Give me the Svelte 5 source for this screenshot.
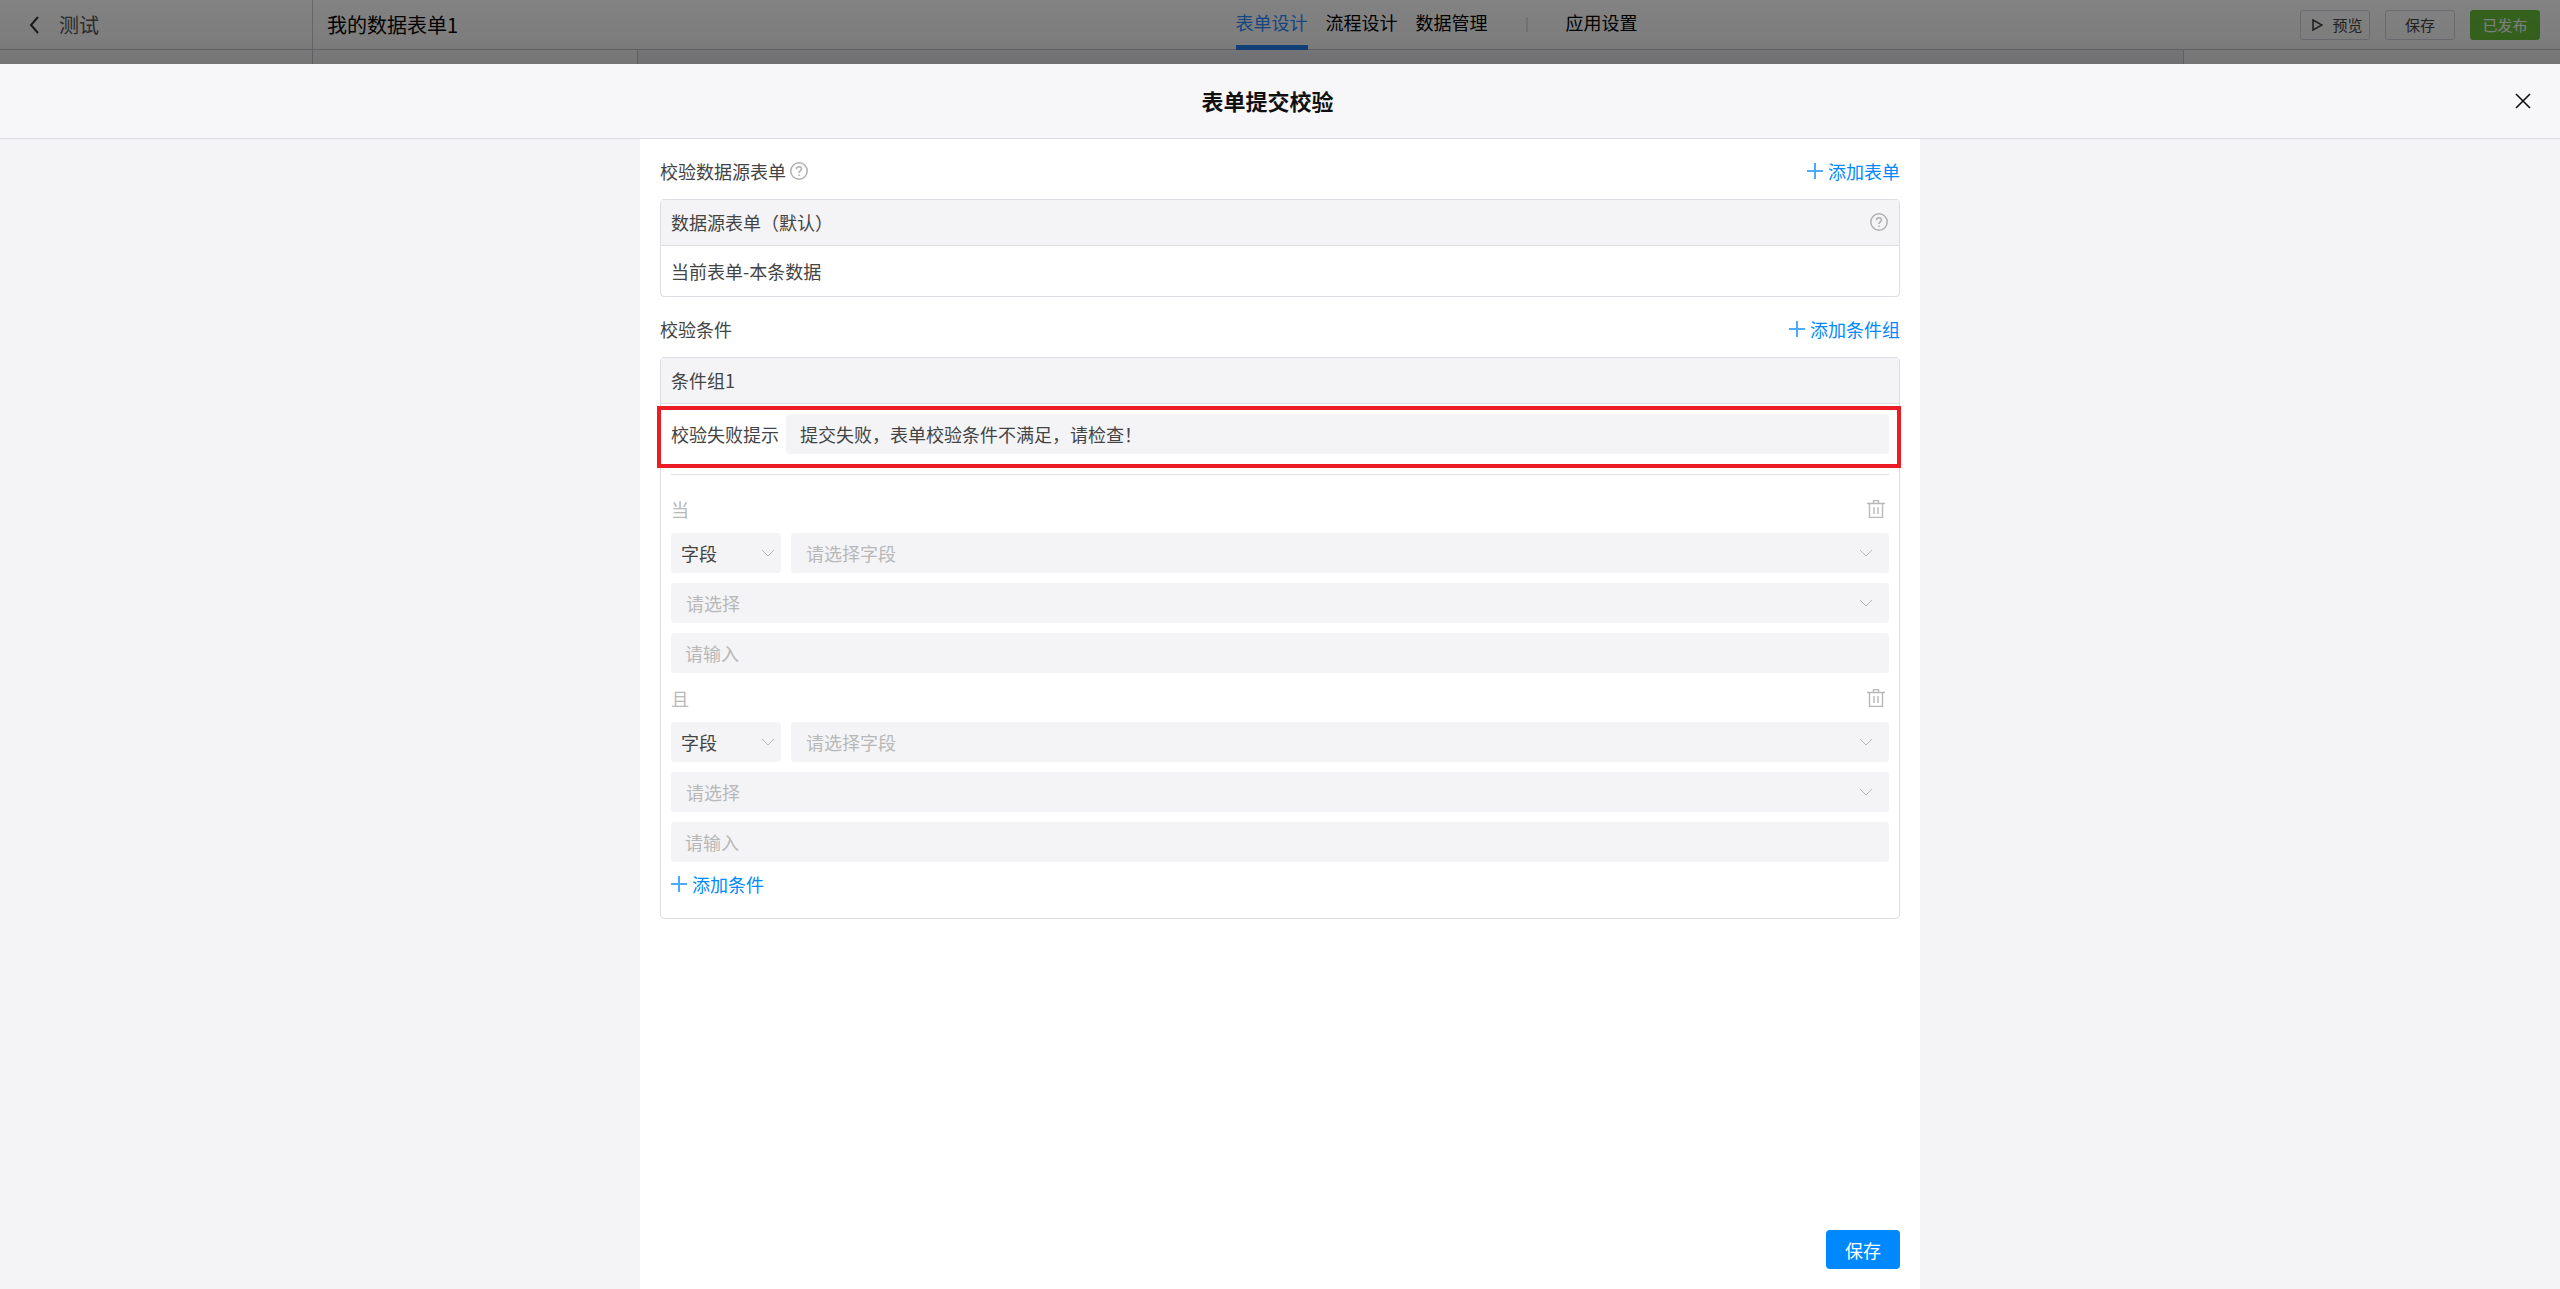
<script>
  const tabs = ['表单设计', '流程设计', '数据管理'];
  let activeTab = $state('表单设计');
  let message = $state('提交失败，表单校验条件不满足，请检查！');
  let conditions = $state([
    { id: 1, label: '当', kind: '字段', field: '', operator: '', value: '' },
    { id: 2, label: '且', kind: '字段', field: '', operator: '', value: '' }
  ]);

  function addCondition() {
    const id = Math.max(0, ...conditions.map((c) => c.id)) + 1;
    conditions.push({ id, label: id === 1 ? '当' : '且', kind: '字段', field: '', operator: '', value: '' });
  }

  function removeCondition(id) {
    conditions = conditions.filter((c) => c.id !== id);
  }
</script>

{#snippet plus()}
  <svg class="plus" viewBox="0 0 16 16" width="16" height="16" aria-hidden="true"><path d="M8 0v16M0 8h16" /></svg>
{/snippet}

{#snippet help()}
  <svg class="help" viewBox="0 0 18 18" width="18" height="18" aria-hidden="true">
    <circle cx="9" cy="9" r="8.2" />
    <path d="M6.5 7.2c0-1.5 1-2.5 2.5-2.5s2.5 1 2.5 2.3c0 1.9-2.5 1.9-2.5 3.9M9 12.4v1.6" />
  </svg>
{/snippet}

{#snippet chevron()}
  <svg class="chevron" viewBox="0 0 14 8" width="14" height="8" aria-hidden="true"><path d="M1 1l6 6 6-6" /></svg>
{/snippet}

<div class="page">
  <div class="designer">
    <header class="topbar">
      <div class="app">
        <button class="plain back" aria-label="返回">
          <svg viewBox="0 0 10 18" width="10" height="18"><path d="M9 1L2 9l7 8" /></svg>
        </button>
        <span>测试</span>
      </div>
      <div class="form-name">我的数据表单1</div>
      <nav class="tabs">
        {#each tabs as tab}
          <a href="#{tab}" class:active={tab === activeTab} onclick={() => (activeTab = tab)}>{tab}</a>
        {/each}
        <span class="bar"></span>
        <a href="#settings">应用设置</a>
      </nav>
      <div class="actions">
        <button class="preview">
          <svg viewBox="0 0 11 12" width="11" height="12"><path d="M1 1l9 5-9 5z" /></svg>预览
        </button>
        <button>保存</button>
        <button class="published">已发布</button>
      </div>
    </header>
    <div class="strip"><i></i><i></i><i></i><i></i></div>
  </div>

  <section class="modal">
    <header class="modal-head">
      <h1>表单提交校验</h1>
      <button class="plain close" aria-label="关闭">
        <svg viewBox="0 0 16 16" width="16" height="16"><path d="M1 1l14 14M15 1L1 15" /></svg>
      </button>
    </header>

    <main class="panel">
      <div class="section-head">
        <h2>校验数据源表单</h2>
        {@render help()}
        <button class="plain link">{@render plus()}添加表单</button>
      </div>
      <div class="card">
        <div class="card-head"><span>数据源表单（默认）</span>{@render help()}</div>
        <div class="source">当前表单-本条数据</div>
      </div>

      <div class="section-head second">
        <h2>校验条件</h2>
        <button class="plain link">{@render plus()}添加条件组</button>
      </div>
      <div class="card">
        <div class="card-head">条件组1</div>
        <div class="group">
          <div class="tip">
            <label for="tip">校验失败提示</label>
            <input id="tip" type="text" bind:value={message} />
            <span class="frame"></span>
          </div>
          {#each conditions as c (c.id)}
            <div class="condition">
              <div class="condition-head">
                <span>{c.label}</span>
                <button class="plain trash" aria-label="删除条件" onclick={() => removeCondition(c.id)}>
                  <svg viewBox="0 0 18 18" width="18" height="18">
                    <path d="M0 3.5h18M6.5 3.5v-3h5v3M2.5 3.5v14h13v-14M7 7v7M11 7v7" />
                  </svg>
                </button>
              </div>
              <div class="pair">
                <div class="select kind">
                  <select aria-label="类型" bind:value={c.kind}><option>字段</option></select>
                  {@render chevron()}
                </div>
                <div class="select">
                  <select class="empty" aria-label="选择字段" bind:value={c.field}><option value="">请选择字段</option></select>
                  {@render chevron()}
                </div>
              </div>
              <div class="select">
                <select class="empty" aria-label="选择条件" bind:value={c.operator}><option value="">请选择</option></select>
                {@render chevron()}
              </div>
              <input type="text" aria-label="值" placeholder="请输入" bind:value={c.value} />
            </div>
          {/each}
          <button class="plain link add" onclick={addCondition}>{@render plus()}添加条件</button>
        </div>
      </div>

      <footer><button class="save">保存</button></footer>
    </main>
  </section>
</div>

<style>
  :global(body) {
    margin: 0;
  }
  .page {
    min-height: 100vh;
    display: flex;
    flex-direction: column;
    font-family: 'Microsoft YaHei', 'Noto Sans CJK SC', sans-serif;
    font-size: 18px;
    line-height: 24px;
    color: #444;
  }
  .page * {
    box-sizing: border-box;
  }
  button,
  input,
  select {
    font: inherit;
    color: inherit;
    margin: 0;
  }
  button {
    cursor: pointer;
  }
  svg {
    display: block;
    flex: none;
    fill: none;
    stroke: currentColor;
  }
  .plain {
    border: 0;
    padding: 0;
    background: none;
  }

  .designer {
    position: relative;
    background: #fff;
  }
  .designer::after {
    content: '';
    position: absolute;
    inset: 0;
    background: linear-gradient(rgba(0, 0, 0, 0.49), rgba(0, 0, 0, 0.51) 60%, rgba(0, 0, 0, 0.54));
    pointer-events: none;
  }
  .topbar {
    display: grid;
    grid-template-columns: 313px 1fr auto 1fr;
    height: 50px;
    border-bottom: 1px solid #c9cbd4;
    color: #000;
  }
  .app,
  .form-name {
    display: flex;
    align-items: center;
    font-size: 20px;
  }
  .app {
    gap: 20px;
    padding-left: 29px;
    border-right: 1px solid #c9cbd4;
    color: #555;
  }
  .back {
    color: #333;
  }
  .back svg {
    stroke-width: 2;
  }
  .form-name {
    padding-left: 14px;
  }
  .tabs {
    display: flex;
    gap: 18px;
  }
  .tabs a {
    height: 50px;
    padding-top: 10px;
    color: #000;
    text-decoration: none;
  }
  .tabs a.active {
    color: #2b8cff;
    border-bottom: 5px solid #2482f5;
  }
  .bar {
    width: 2px;
    height: 15px;
    margin: 17px 20px 0;
    background: #e4e4ea;
  }
  .actions {
    display: flex;
    justify-content: flex-end;
    align-items: center;
    gap: 15px;
    padding-right: 20px;
  }
  .actions button {
    display: flex;
    align-items: center;
    justify-content: center;
    gap: 9px;
    width: 70px;
    height: 30px;
    padding: 0;
    border: 1px solid #d5d7e0;
    border-radius: 3px;
    background: transparent;
    font-size: 15px;
    color: #444;
  }
  .actions .preview {
    padding-left: 5px;
  }
  .actions svg {
    stroke-width: 1.6;
  }
  .actions .published {
    background: #67c23a;
    border-color: #67c23a;
    color: #fff;
  }
  .strip {
    display: grid;
    grid-template-columns: 313px 325px 1fr 376px;
    height: 14px;
  }
  .strip i {
    border-right: 1px solid #c9cbd4;
  }
  .strip i:nth-child(3) {
    background: #f4f4f8;
  }
  .strip i:last-child {
    border: 0;
  }

  .modal {
    flex: 1;
    display: flex;
    flex-direction: column;
    background: #f4f4f7;
  }
  .modal-head {
    display: flex;
    align-items: center;
    height: 75px;
    padding-right: 29px;
    border-bottom: 1px solid #dcdde4;
    background: #f7f7f9;
    color: #111;
  }
  h1 {
    flex: 1;
    margin: 0;
    padding: 0 0 2px 20px;
    font-size: 22px;
    line-height: 30px;
    text-align: center;
  }
  .close svg {
    stroke-width: 1.6;
  }
  .panel {
    flex: 1;
    display: flex;
    flex-direction: column;
    width: 50%;
    margin: 0 auto;
    padding: 20px;
    background: #fff;
  }
  .section-head {
    display: flex;
    align-items: center;
    height: 24px;
    margin-bottom: 16px;
  }
  .second {
    margin-top: 20px;
  }
  h2 {
    margin: 0 4px 0 0;
    font-size: inherit;
    line-height: inherit;
    font-weight: 400;
  }
  .help {
    color: #b0b0b0;
    stroke-width: 1.5;
  }
  .link {
    display: flex;
    align-items: center;
    gap: 5px;
    color: #0089ff;
  }
  .section-head .link {
    margin-left: auto;
  }
  .plus {
    opacity: 0.7;
    stroke-width: 2;
  }
  .card {
    border: 1px solid #dcdde4;
    border-radius: 4px;
  }
  .card-head {
    display: flex;
    align-items: center;
    justify-content: space-between;
    height: 46px;
    padding: 0 11px 2px 10px;
    border-bottom: 1px solid #dcdde4;
    background: #f4f4f7;
  }
  .source {
    padding: 13px 10px;
  }
  .group {
    padding: 0 10px 22px;
  }
  .tip {
    position: relative;
    display: flex;
    align-items: center;
    gap: 7px;
    padding: 10px 0 20px;
    border-bottom: 1px solid #dcdde4;
    margin-bottom: 19px;
  }
  .frame {
    position: absolute;
    inset: 2px -12px 6px -14px;
    border: 4px solid #ed1c24;
    pointer-events: none;
  }
  input {
    flex: 1;
    min-width: 0;
    height: 40px;
    padding: 0 14px;
    border: 0;
    border-radius: 4px;
    background: #f4f4f7;
  }
  input::placeholder {
    color: #b8b8b8;
  }
  .condition {
    display: flex;
    flex-direction: column;
    gap: 10px;
    margin-bottom: 10px;
  }
  .condition input {
    flex: none;
  }
  .condition-head {
    display: flex;
    align-items: center;
    justify-content: space-between;
    height: 29px;
    padding-right: 4px;
    color: #b8b8b8;
  }
  .trash svg {
    stroke-width: 1.4;
  }
  .pair {
    display: grid;
    grid-template-columns: 110px 1fr;
    gap: 10px;
  }
  .select {
    display: grid;
    align-items: center;
  }
  select,
  .chevron {
    grid-area: 1 / 1;
  }
  select {
    appearance: none;
    width: 100%;
    height: 40px;
    padding: 0 40px 0 15px;
    border: 0;
    border-radius: 4px;
    background: #f4f4f7;
  }
  .empty {
    color: #b8b8b8;
  }
  .kind select {
    padding: 0 24px 0 10px;
  }
  .chevron {
    justify-self: end;
    margin-right: 16px;
    color: #b8b8b8;
    pointer-events: none;
  }
  .kind .chevron {
    margin-right: 6px;
  }
  footer {
    display: flex;
    justify-content: flex-end;
    margin-top: auto;
    padding-top: 20px;
  }
  .save {
    width: 74px;
    height: 39px;
    padding: 0;
    border: 0;
    border-radius: 4px;
    background: #0089ff;
    color: #fff;
  }
</style>
